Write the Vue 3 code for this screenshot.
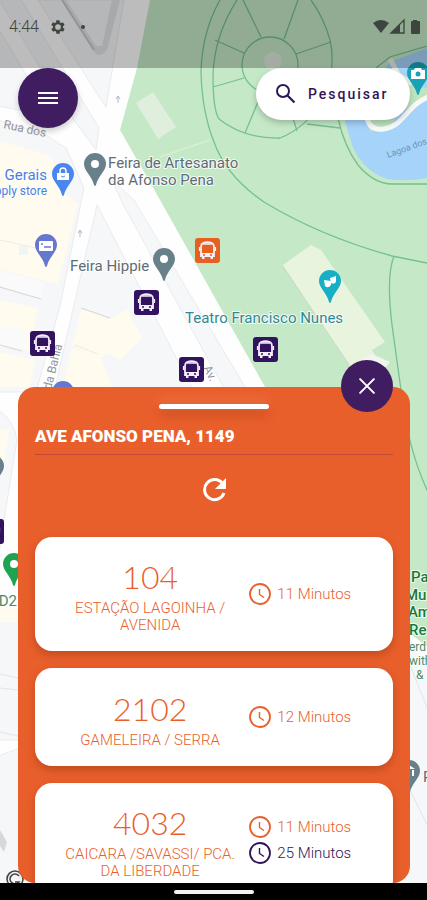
<script setup>
import { ref } from 'vue'

const search = ref('')

const stops = [
  { x: 195, y: 238, color: '#e8601f' },
  { x: 134, y: 290, color: '#32135f' },
  { x: 30, y: 331, color: '#32135f' },
  { x: 179, y: 357, color: '#32135f' },
  { x: 253, y: 337, color: '#32135f' },
  { x: -21, y: 519, color: '#32135f' },
]

const pins = [
  { x: 95, y: 165, color: '#67808a', kind: 'dot' },
  { x: 164, y: 260, color: '#67808a', kind: 'dot' },
  { x: 63, y: 175, color: '#4a86f0', kind: 'bag' },
  { x: 46, y: 246, color: '#6577cf', kind: 'hotel' },
  { x: 330, y: 282, color: '#17afc4', kind: 'masks' },
  { x: 418, y: 74, color: '#17a2b5', kind: 'camera' },
  { x: 14, y: 565, color: '#1fa350', kind: 'dot' },
  { x: 63, y: 393, color: '#6577cf', kind: 'none' },
  { x: -7, y: 467, color: '#67808a', kind: 'none' },
  { x: 409, y: 772, color: '#67808a', kind: 'museum' },
]

const routes = [
  { number: '104', name: 'ESTAÇÃO LAGOINHA / AVENIDA', times: [{ label: '11 Minutos' }] },
  { number: '2102', name: 'GAMELEIRA / SERRA', times: [{ label: '12 Minutos' }] },
  {
    number: '4032',
    name: 'CAICARA /SAVASSI/ PCA. DA LIBERDADE',
    times: [{ label: '11 Minutos' }, { label: '25 Minutos', later: true }],
  },
]
</script>

<template>
  <main class="screen">
    <svg class="map" viewBox="0 0 427 900" preserveAspectRatio="xMidYMin slice" aria-hidden="true">
      <rect width="427" height="900" fill="#fefefe" />
      <!-- city blocks -->
      <g fill="#f6f7f9" stroke="#e9ebee" stroke-width="1">
        <path d="M38 0H124L106 107L96 92Z" />
        <path d="M-2 -2H20L99 128L96 150L62 104Z" />
        <path d="M-2 28L46 108L30 112L-2 106Z" />
        <path d="M-2 120L44 134L66 148L84 188L60 306L36 392H-2Z" />
        <path d="M97 205L194 392H54Z" />
        <path d="M112 180L124 206L226 392H248L134 200Z" />
        <path d="M-2 410Q14 420 17 440L4 520L-2 560Z" />
        <path d="M-2 610H20V740H-2Z" />
        <path d="M-2 756L20 748V900H-2Z" />
      </g>
      <path d="M62 0L93 50Q98 60 107 50L120 0H112L102 46L96 46L66 0Z" fill="#e3e4e6" />
      <path d="M62 0L94 50" stroke="#c6c8ca" stroke-width="2" />
      <g fill="#fffbee">
        <path d="M0 141L48 155Q60 165 62 190L78 204L58 284L0 269Z" />
        <path d="M0 300L38 308L30 350L0 346Z" />
        <path d="M0 352L35 360L30 387H0Z" />
        <path d="M82 309L110 319L128 309L142 338L120 360L106 353L100 360L72 345Z" />
        <path d="M72 348L100 356L106 370L112 387H62Z" />
        <path d="M0 430L10 428L4 462H0Z" />
        <path d="M0 605H18V622H0Z" />
      </g>
      <path d="M0 270L44 282L41 299L0 287ZM0 325L28 331L24 350L0 345Z" fill="#fafafa" />
      <g fill="none" stroke="#d8d9da" stroke-width="1.2">
        <path d="M0 287L41 299M0 345L22 351M81 308L110 318" />
        <path d="M0 240L45 250M75 345L98 354" stroke="#f0ebdd" />
        <path d="M0 674L18 678M0 688L18 690M0 732L18 736" stroke="#e8e4de" />
      </g>
      <rect x="19" y="246" width="9" height="9" fill="#eef5f3" />
      <path d="M0 830L7 842L4 852L0 846Z" fill="#d8d8d8" />

      <!-- park -->
      <path d="M150 0H427V646L405 630L265 387L160 200L120 130L137 68Z" fill="#c5e9c7" />
      <path d="M405 630L427 668V900H405Z" fill="#f5f7f8" />
      <path d="M408 660L432 720M405 780L432 835" fill="none" stroke="#e2e4e7" />
      <path d="M136 103L153 92L176 127L158 139Z" fill="#e0eede" />
      <path d="M283 265L311 245L321 250L385 342L372 350L378 360L350 366Z" fill="#e9f4df" />
      <path d="M282 266L350 366" stroke="#cfd8c6" />
      <path d="M372 354L390 362L380 374L350 366Z" fill="#f1f4ef" />
      <path d="M160 157L210 140" stroke="#d9efcf" stroke-width="1.5" />

      <!-- lake -->
      <path d="M344 118L390 62L427 48V178Q405 182 387 179Q362 170 352 145Z" fill="#a5d3fa" />
      <path d="M350 90L378 66L396 76L412 86L427 88V98Q400 108 386 131H370L366 116Z" fill="#bfe5c0" />
      <path d="M367 118Q370 131 384 129C404 126 406 106 428 97" fill="none" stroke="#f7faf7" stroke-width="5" />
      <path d="M390 59L398 74L412 84" fill="none" stroke="#e6efe6" stroke-width="5" />
      <g fill="none" stroke="#76c090" stroke-width="1.3">
        <path d="M220 0Q202 32 201 72Q202 112 214 142Q226 176 264 202Q320 236 392 256L427 263" />
        <path d="M237 0Q214 36 213 76Q213 110 219 119Q244 139 280 138Q306 128 325 98Q336 65 330 40Q324 18 311 0" />
        <circle cx="270" cy="65" r="28" />
        <path d="M243 0L261 37M298 0L284 39M215 40L244 53M331 42L296 54M213 87L244 78M258 102L245 133M288 102L297 131" />
        <path d="M307 124L340 128M338 118Q344 146 358 165Q374 184 392 184H427M376 68L390 57L427 46" />
        <path d="M394 256Q386 276 392 325L401 390Q408 450 428 492" />
      </g>
      <circle cx="273" cy="61" r="9" fill="#dce8dc" />

      <!-- street names and places -->
      <g class="street">
        <text transform="translate(3 128) rotate(12)">Rua dos</text>
        <text transform="translate(51 390) rotate(-76)">da Bahia</text>
        <text transform="translate(203 368) rotate(62)">Av.</text>
        <text transform="translate(388 158) rotate(-20)" class="water">Lagoa dos</text>
      </g>
      <path d="M118 96V103M116 99L118 96L120 99M80 230V237M78 233L80 230L82 233" fill="none" stroke="#b5b8c0" />
      <g class="place">
        <text x="108" y="168">Feira de Artesanato</text>
        <text x="108" y="185">da Afonso Pena</text>
        <text x="70" y="271">Feira Hippie</text>
        <text x="185" y="323" class="teal">Teatro Francisco Nunes</text>
        <text x="47" y="180" text-anchor="end" class="blue">Gerais</text>
        <text x="47" y="195" text-anchor="end" class="blue small">pply store</text>
        <text x="17" y="606" text-anchor="end" class="green">D2</text>
        <text x="411" y="582" class="park">Pa</text>
        <text x="405" y="600" class="park">Mu</text>
        <text x="408" y="617" class="park">Am</text>
        <text x="409" y="635" class="park">Re</text>
        <text x="409" y="651" class="green small">erd</text>
        <text x="409" y="665" class="green small">with</text>
        <text x="416" y="679" class="green small">&amp;</text>
        <text x="423" y="782">P</text>
      </g>

      <g v-for="(pin, i) in pins" :key="'pin' + i" :transform="`translate(${pin.x} ${pin.y})`">
        <path d="M0 -12A11 11 0 0 1 11 -1C11 6 3 11 1 20Q0 22 -1 20C-3 11 -11 6 -11 -1A11 11 0 0 1 0 -12Z" :fill="pin.color" />
        <circle v-if="pin.kind === 'dot'" r="4" cy="-1" fill="#fff" />
        <g v-else-if="pin.kind === 'bag'">
          <path d="M-6 -2H6V5H-6Z" fill="#fff" />
          <path d="M-3 -2V-4A3 3 0 0 1 3 -4V-2" fill="none" stroke="#fff" stroke-width="1.4" />
          <path d="M-2 1Q0 3 2 1" fill="none" stroke="#4a86f0" />
        </g>
        <g v-else-if="pin.kind === 'hotel'">
          <rect x="-7" y="-5" width="14" height="10" rx="1" fill="#fff" />
          <path d="M-4 -3V-1M-2 1H5" stroke="#6577cf" stroke-width="1.5" />
        </g>
        <g v-else-if="pin.kind === 'masks'" fill="#fff">
          <path d="M-6 -2L1 -1V3Q-2 7 -5 4Z" />
          <path d="M0 -4L6 -6V0Q4 3 1 1Z" />
        </g>
        <g v-else-if="pin.kind === 'camera'">
          <path d="M-7 -4H-4L-3 -6H3L4 -4H7V5H-7Z" fill="#fff" />
          <circle r="2.5" cy="0" fill="#17a2b5" />
        </g>
        <path v-else-if="pin.kind === 'museum'" d="M-6 -3L0 -7L6 -3ZM-5 -2H-3V4H-5ZM-1 -2H1V4H-1ZM3 -2H5V4H3Z" fill="#fff" />
      </g>

      <g v-for="(stop, i) in stops" :key="'stop' + i" :transform="`translate(${stop.x} ${stop.y})`">
        <rect width="25" height="25" rx="3" :fill="stop.color" />
        <path d="M8 5Q12.500 3.500 17 5Q19 6 19 9V18H6V9Q6 6 8 5Z" :fill="stop.color" stroke="#f3eef8" stroke-width="1.800" />
        <path d="M6 15H19V19H18V21H15.500V19H9.500V21H7V19H6Z" fill="#f3eef8" />
        <path d="M8 6H17" stroke="#f3eef8" stroke-width="1.500" />
        <path d="M4.500 9V13M20.500 9V13" stroke="#f3eef8" stroke-width="1.200" />
        <circle cx="9" cy="17" r="1" :fill="stop.color" />
        <circle cx="16" cy="17" r="1" :fill="stop.color" />
      </g>

      <g fill="none" stroke="#444" stroke-width="1.6">
        <circle cx="15" cy="879" r="8" />
        <path d="M19 876A5 5 0 1 0 19 882H15" />
      </g>
    </svg>

    <div class="top">
      <header class="status">
        <span class="clock">4:44</span>
        <svg class="gear" viewBox="0 0 24 24" aria-hidden="true">
          <path fill="currentColor" fill-rule="evenodd" d="M19.400 13a7.500 7.500 0 0 0 0-2l2.100-1.600a.5.5 0 0 0 .1-.7l-2-3.400a.5.5 0 0 0-.6-.2l-2.500 1a7.400 7.400 0 0 0-1.700-1l-.4-2.700a.5.5 0 0 0-.5-.4h-4a.5.5 0 0 0-.5.4L9 5.100a7.400 7.400 0 0 0-1.700 1l-2.500-1a.5.5 0 0 0-.6.2l-2 3.400a.5.5 0 0 0 .1.700L4.500 11a7.500 7.500 0 0 0 0 2l-2.100 1.600a.5.5 0 0 0-.1.700l2 3.400c.1.200.4.300.6.200l2.500-1c.5.400 1.100.7 1.700 1l.4 2.700c0 .2.200.4.500.4h4c.3 0 .5-.2.5-.4l.4-2.700a7.400 7.400 0 0 0 1.700-1l2.500 1c.2.100.5 0 .6-.2l2-3.400a.5.5 0 0 0-.1-.7zM12 16.300a4.300 4.300 0 1 1 0-8.600 4.300 4.300 0 0 1 0 8.600z" />
        </svg>
        <span class="dot"></span>
        <svg class="signals" viewBox="0 0 46 16" aria-hidden="true">
          <path d="M0 4Q8 -2 16 4L8 14Z" fill="currentColor" />
          <path d="M18 14L31 1V14Z" fill="none" stroke="currentColor" stroke-width="1.300" />
          <path d="M18 14L27 5V14Z" fill="currentColor" />
          <path d="M40 1H44V2H46Q47 2 47 3V14Q47 15 46 15H39Q38 15 38 14V3Q38 2 39 2H40Z" fill="currentColor" />
        </svg>
      </header>
      <div class="tools">
        <button class="menu" type="button" aria-label="Menu">
          <svg viewBox="0 0 30 30" aria-hidden="true"><path d="M5 10H25M5 15H25M5 20H25" stroke="#fff" stroke-width="2" /></svg>
        </button>
        <label class="search">
          <svg viewBox="0 0 24 24" aria-hidden="true">
            <circle cx="9" cy="9" r="6" fill="none" stroke="#2f1556" stroke-width="2" />
            <path d="M13.500 13.500L20.500 20.500" stroke="#2f1556" stroke-width="2.200" />
          </svg>
          <input v-model="search" type="text" placeholder="Pesquisar" aria-label="Pesquisar" />
        </label>
      </div>
    </div>

    <section class="sheet">
      <button class="close" type="button" aria-label="Fechar">
        <svg viewBox="0 0 24 24" aria-hidden="true"><path d="M4.500 4.500L19.500 19.500M19.500 4.500L4.500 19.500" stroke="#fff" stroke-width="2.200" stroke-linecap="round" /></svg>
      </button>
      <div class="content">
        <div class="handle"></div>
        <h1>AVE AFONSO PENA, 1149</h1>
        <button class="refresh" type="button" aria-label="Atualizar">
          <svg viewBox="0 0 24 24" aria-hidden="true">
            <path d="M20.500 5.500A10 10 0 1 0 22 15" fill="none" stroke="#fff" stroke-width="3" />
            <path d="M24 0V11H13Z" fill="#fff" />
          </svg>
        </button>
        <ul class="routes">
          <li v-for="route in routes" :key="route.number" class="card">
            <div class="route">
              <h2>{{ route.number }}</h2>
              <p>{{ route.name }}</p>
            </div>
            <div class="times">
              <span v-for="time in route.times" :key="time.label" class="time" :class="{ later: time.later }">
                <svg viewBox="0 0 24 24" aria-hidden="true">
                  <circle cx="12" cy="12" r="10" fill="none" stroke="currentColor" stroke-width="1.800" />
                  <path d="M11.500 7V12.500L16 15.500" fill="none" stroke="currentColor" stroke-width="1.400" />
                </svg>
                {{ time.label }}
              </span>
            </div>
          </li>
        </ul>
      </div>
    </section>

    <footer class="navbar"><span></span></footer>
  </main>
</template>

<style>
body {
  margin: 0;
}
</style>

<style scoped>
.screen {
  position: relative;
  display: flex;
  flex-direction: column;
  height: 100vh;
  overflow: hidden;
  font-family: Roboto, "Liberation Sans", sans-serif;
}
.map {
  position: absolute;
  inset: 0;
  width: 100%;
  height: 100%;
}
.place text {
  font-size: 15px;
  fill: #5d6d75;
  stroke: #fff;
  stroke-width: 2px;
  stroke-opacity: 0.8;
  paint-order: stroke;
}
.place .teal { fill: #2f8994; }
.place .blue { fill: #4a7fe0; }
.place .green { fill: #4a8b64; }
.place .park { fill: #187a38; font-weight: 500; }
.place .small { font-size: 12px; }
.street text {
  font-size: 12px;
  fill: #92969c;
}
.street .water {
  font-size: 9px;
  fill: #6f93b8;
}
button {
  display: grid;
  place-items: center;
  padding: 0;
  border: 0;
  cursor: pointer;
}
.top {
  position: relative;
  flex: 0 0 43%;
}
.status {
  display: flex;
  align-items: center;
  box-sizing: border-box;
  height: 68px;
  padding: 0 7px 14px 9px;
  background: rgba(0, 0, 0, 0.26);
  color: #3d453f;
}
.clock {
  font-size: 16px;
  font-weight: 300;
  line-height: 20px;
}
.gear {
  width: 16px;
  height: 16px;
  margin-left: 11px;
}
.dot {
  width: 4px;
  height: 4px;
  margin-left: 15px;
  border-radius: 50%;
  background: currentColor;
}
.signals {
  width: 48px;
  height: 16px;
  margin-left: auto;
  overflow: visible;
}
.tools {
  display: flex;
  align-items: flex-start;
  justify-content: space-between;
  padding: 0 17px 0 18px;
}
.menu {
  width: 60px;
  height: 60px;
  border-radius: 50%;
  background: #3f1d60;
  box-shadow: 0 3px 6px rgba(0, 0, 0, 0.2);
}
.menu svg {
  width: 30px;
  height: 30px;
}
.search {
  display: flex;
  align-items: center;
  gap: 10px;
  box-sizing: border-box;
  width: 154px;
  height: 52px;
  padding: 0 12px 0 18px;
  border-radius: 26px;
  background: #fff;
  box-shadow: 0 3px 6px rgba(0, 0, 0, 0.22);
}
.search svg {
  flex: none;
  width: 24px;
  height: 24px;
}
.search input {
  flex: 1;
  min-width: 0;
  padding: 0;
  border: 0;
  outline: 0;
  background: none;
  font: 500 14px/20px Roboto, "Liberation Sans", sans-serif;
  letter-spacing: 2px;
  color: #2f1556;
}
.search input::placeholder {
  color: #2f1556;
  opacity: 1;
}
.sheet {
  position: relative;
  display: flex;
  flex: 1;
  min-height: 0;
  margin: 0 17px 0 18px;
}
.content {
  display: flex;
  flex: 1;
  flex-direction: column;
  min-width: 0;
  padding: 17px 17px 0;
  overflow: hidden;
  border-radius: 17px;
  background: #e95f2b;
}
.close {
  position: absolute;
  top: -27px;
  right: 17px;
  width: 52px;
  height: 52px;
  border-radius: 50%;
  background: #3f1d60;
}
.close svg {
  width: 22px;
  height: 22px;
}
.handle {
  flex: none;
  align-self: center;
  width: 110px;
  height: 5px;
  border-radius: 3px;
  background: #fff;
  box-shadow: 0 6px 10px rgba(110, 30, 0, 0.3), 0 -4px 12px rgba(255, 255, 255, 0.16);
}
h1 {
  margin: 17px 0 0;
  padding-bottom: 8px;
  border-bottom: 1px solid #c04c38;
  color: #fff;
  font-size: 17px;
  font-weight: 900;
  line-height: 20px;
}
.refresh {
  flex: none;
  align-self: center;
  width: 34px;
  height: 34px;
  margin: 18px 0 30px;
  background: none;
}
.refresh svg {
  width: 24px;
  height: 24px;
}
.routes {
  display: flex;
  flex-direction: column;
  gap: 17px;
  margin: 0;
  padding: 0;
  list-style: none;
}
.card {
  display: grid;
  grid-template-columns: 20fr 13fr;
  align-items: center;
  box-sizing: border-box;
  min-height: 98px;
  padding: 17px;
  border-radius: 17px;
  background: #fff;
  box-shadow: 0 4px 8px rgba(90, 25, 0, 0.28);
  color: #e95f2b;
}
.route {
  padding: 0 8px;
  text-align: center;
}
h2 {
  margin: 0;
  font-family: Lato, "Liberation Sans", sans-serif;
  font-size: 32px;
  font-weight: 300;
  line-height: 46px;
}
p {
  margin: 0;
  font-size: 15px;
  font-weight: 300;
  line-height: 17px;
}
.times {
  display: flex;
  flex-direction: column;
}
.time {
  display: flex;
  align-items: center;
  gap: 5px;
  font-size: 15px;
  font-weight: 300;
  line-height: 26px;
  white-space: nowrap;
}
.time svg {
  width: 24px;
  height: 24px;
}
.later {
  color: #2f1556;
}
.navbar {
  position: relative;
  display: grid;
  place-items: center;
  flex: none;
  height: 17px;
  background: #000;
}
.navbar span {
  width: 80px;
  height: 4px;
  border-radius: 2px;
  background: #f2f2f2;
}
</style>
